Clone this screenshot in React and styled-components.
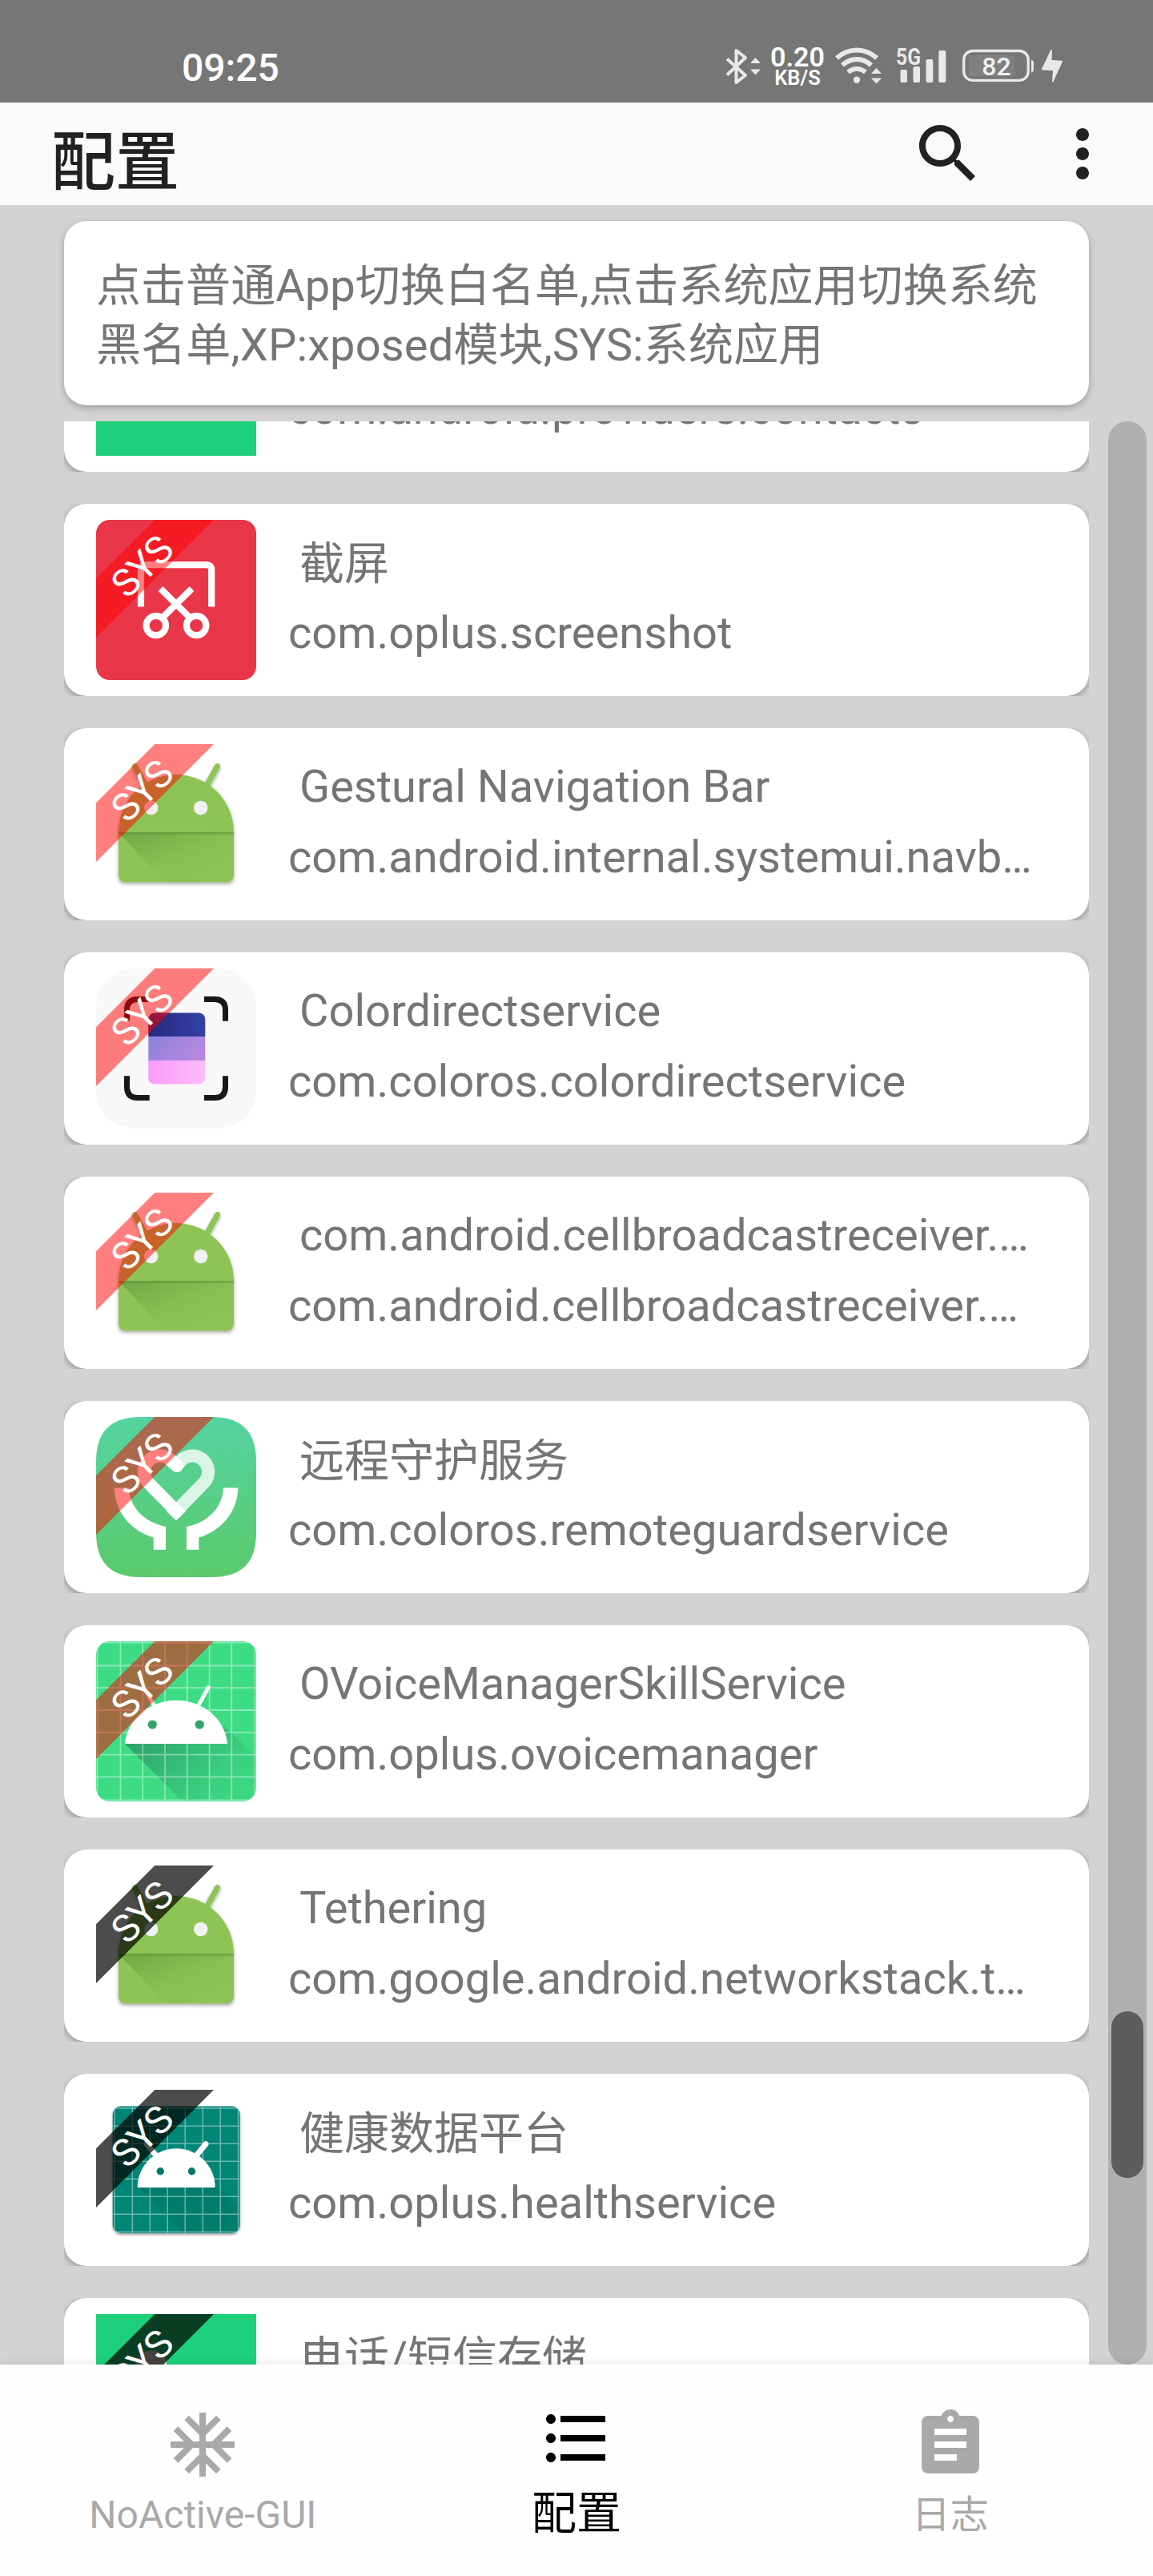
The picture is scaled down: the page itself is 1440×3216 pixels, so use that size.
import React from "react";
import styled, { createGlobalStyle } from "styled-components";

const GlobalStyle = createGlobalStyle`
  * { box-sizing: border-box; }
  body {
    margin: 0;
    background: #d3d3d3;
    font-family: Roboto, "Noto Sans CJK SC", sans-serif;
  }
  svg { display: block; flex: none; }
`;

const Screen = styled.div`
  display: flex;
  flex-direction: column;
  width: 1440px;
  height: 3216px;
  overflow: hidden;
  background: #d3d3d3;
`;

/* ---------- status bar ---------- */

const StatusBar = styled.header`
  display: flex;
  align-items: flex-start;
  flex: none;
  height: 128px;
  padding: 58px 113px 0 227px;
  background: #767676;
  color: #fff;
`;

const Clock = styled.time`
  flex: 1;
  font-size: 48px;
  line-height: 54px;
  font-weight: 500;
`;

const StatusItem = styled.div`
  display: flex;
  flex: none;
  width: ${(p) => p.$w}px;
  margin-left: ${(p) => p.$gap || 0}px;
`;

const NetSpeed = styled.div`
  display: flex;
  flex-direction: column;
  align-items: center;
  flex: none;
  width: 72px;
  margin-left: 8px;
  font-weight: 600;
`;

const NetValue = styled.span`
  font-size: 34px;
  line-height: 27px;
`;

const NetUnit = styled.span`
  font-size: 25.5px;
  line-height: 25px;
`;

/* ---------- app bar ---------- */

const AppBar = styled.div`
  display: flex;
  align-items: center;
  flex: none;
  height: 128px;
  padding: 0 40px 0 64px;
  background: #fafafa;
  color: #212121;
`;

const Title = styled.h1`
  flex: 1;
  margin: 0;
  padding-top: 22px;
  font-size: 80px;
  font-weight: 500;
  line-height: 106px;
`;

const IconButton = styled.button`
  display: flex;
  padding: 0;
  margin: 0 0 0 ${(p) => p.$gap || 0}px;
  border: 0;
  background: none;
  color: inherit;
`;

/* ---------- content ---------- */

const Hint = styled.p`
  display: flex;
  flex-direction: column;
  flex: none;
  height: 230px;
  margin: 20px 80px;
  padding: 44px 40px 0;
  border-radius: 28px;
  background: #fff;
  box-shadow: 0 3px 8px rgba(0, 0, 0, 0.26);
  color: #757575;
  font-size: 56px;
  line-height: 74px;
  white-space: nowrap;
`;

const HintLine = styled.span`
  letter-spacing: ${(p) => p.$track}px;
`;

const Body = styled.main`
  display: flex;
  flex: none;
  height: 2426px;
  padding: 0 8px 0 80px;
  overflow: hidden;
`;

const List = styled.ul`
  display: flex;
  flex-direction: column;
  gap: 40px;
  flex: none;
  width: 1280px;
  margin: -177px 24px 0 0;
  padding: 0;
  list-style: none;
`;

const Row = styled.li`
  flex: none;
  height: 240px;
  overflow: hidden;
`;

const Card = styled.article`
  display: flex;
  gap: 40px;
  height: 100%;
  padding: 20px 40px;
  border-radius: 28px;
  background: #fff;
  box-shadow: 0 3px 10px rgba(0, 0, 0, 0.32);
`;

const Labels = styled.div`
  flex: 1;
  min-width: 0;
  padding-top: 9px;
  color: #757575;
  font-size: 56px;
  line-height: 88px;
  white-space: nowrap;
`;

const Name = styled.div`
  height: 88px;
  padding: ${(p) => (p.$cjk ? 2 : 0)}px 0 0 14px;
`;

const Package = styled.div`
  height: 88px;
  letter-spacing: 0.04px;
`;

const Track = styled.div`
  flex: none;
  width: 48px;
  height: 2426px;
  padding: 1985px 4px 0;
  border-radius: 24px;
  background: #b0b0b0;
`;

const Thumb = styled.div`
  height: 208px;
  border-radius: 20px;
  background: #5d5d5d;
`;

/* ---------- bottom navigation ---------- */

const BottomNav = styled.nav`
  position: relative;
  display: flex;
  flex: none;
  height: 264px;
  padding: 0 20px;
  background: #fefefe;
  box-shadow: 0 0 12px rgba(0, 0, 0, 0.12);
`;

const NavItem = styled.a`
  display: flex;
  flex: 1;
  flex-direction: column;
  align-items: center;
  padding-top: ${(p) => (p.$active ? 44 : 52)}px;
  color: ${(p) => (p.$active ? "#000" : "#a9a9a9")};
  font-size: ${(p) => (p.$active ? 56 : 48)}px;
  line-height: 64px;
`;

const NavLabel = styled.span`
  margin-top: ${(p) => (p.$active ? 14 : 8)}px;
`;

/* ---------- glyphs ---------- */

const Glyph = ({ d }) => (
  <svg width="96" height="96" viewBox="0 0 24 24" fill="currentColor">
    <path d={d} />
  </svg>
);

const SEARCH =
  "M15.5 14h-.79l-.28-.27C15.41 12.59 16 11.11 16 9.5 16 5.91 13.09 3 9.5 3S3 5.91 3 9.5 5.91 16 9.5 16c1.61 0 3.09-.59 4.23-1.57l.27.28v.79l5 4.99L20.49 19l-4.99-5zm-6 0C7.01 14 5 11.99 5 9.5S7.01 5 9.5 5 14 7.01 14 9.5 11.99 14 9.5 14z";
const MORE =
  "M12 8c1.1 0 2-.9 2-2s-.9-2-2-2-2 .9-2 2 .9 2 2 2zm0 2c-1.1 0-2 .9-2 2s.9 2 2 2 2-.9 2-2-.9-2-2-2zm0 6c-1.1 0-2 .9-2 2s.9 2 2 2 2-.9 2-2-.9-2-2-2z";
const SNOW =
  "M22 11h-4.17l3.24-3.24-1.41-1.42L15 11h-2V9l4.66-4.66-1.42-1.41L13 6.17V2h-2v4.17L7.76 2.93 6.34 4.34 11 9v2H9L4.34 6.34 2.93 7.76 6.17 11H2v2h4.17l-3.24 3.24 1.41 1.42L9 13h2v2l-4.66 4.66 1.42 1.41L11 17.83V22h2v-4.17l3.24 3.24 1.42-1.41L13 15v-2h2l4.66 4.66 1.41-1.42L17.83 13H22z";
const BULLETS =
  "M4 10.5c-.83 0-1.5.67-1.5 1.5s.67 1.5 1.5 1.5 1.5-.67 1.5-1.5-.67-1.5-1.5-1.5zm0-6c-.83 0-1.5.67-1.5 1.5S3.17 7.5 4 7.5 5.5 6.83 5.5 6 4.83 4.5 4 4.5zm0 12c-.83 0-1.5.68-1.5 1.5s.68 1.5 1.5 1.5 1.5-.68 1.5-1.5-.67-1.5-1.5-1.5zM7 19h14v-2H7v2zm0-6h14v-2H7v2zm0-8v2h14V5H7z";
const CLIPBOARD =
  "M19 3h-4.18C14.4 1.84 13.3 1 12 1c-1.3 0-2.4.84-2.82 2H5c-1.1 0-2 .9-2 2v14c0 1.1.9 2 2 2h14c1.1 0 2-.9 2-2V5c0-1.1-.9-2-2-2zm-7 0c.55 0 1 .45 1 1s-.45 1-1 1-1-.45-1-1 .45-1 1-1zm2 14H7v-2h7v2zm3-4H7v-2h10v2zm0-4H7V7h10v2z";

const Bluetooth = () => (
  <svg width="46" height="50" viewBox="0 0 46 50">
    <path d="M2 15.5 L25 36 L13.5 45 V5 L25 14 L2 35.5" fill="none" stroke="#e8e8e8" strokeWidth="4" strokeLinejoin="round" />
    <path d="M31 21 L37.5 14 L44 21Z M31 28.500 H44 L37.500 35.500Z" fill="#e8e8e8" />
  </svg>
);

const Wifi = () => (
  <svg width="60" height="50" viewBox="0 0 60 50">
    <g fill="none" stroke="#e8e8e8" strokeWidth="6">
      <path d="M2 14.500 C17 1.300 37 1.300 52 14.500" />
      <path d="M9 23.500 C20 13.500 34 13.500 45 23.500" />
      <path d="M16 32 C23 26.500 31 26.500 38 32" />
    </g>
    <circle cx="27" cy="41.800" r="4.200" fill="#e8e8e8" />
    <path d="M45 34 L51.500 27 L58 34Z M45 39.500 H58 L51.500 46.500Z" fill="#e8e8e8" />
  </svg>
);

const Signal = () => (
  <svg width="66" height="54" viewBox="-4 -4 66 54" fill="#e8e8e8">
    <text x="-1" y="23" fontSize="29" fontWeight="700" textLength="31" lengthAdjust="spacingAndGlyphs">5G</text>
    <rect x="4.500" y="29" width="8.500" height="16" rx="2" />
    <rect x="20.500" y="25" width="8.500" height="20" rx="2" />
    <rect x="36.500" y="16" width="8.800" height="29" rx="2" />
    <rect x="52.300" y="5" width="9" height="40" rx="2" />
  </svg>
);

const SignalItem = styled(StatusItem)`
  margin-top: -4px;
`;

const Battery = () => (
  <svg width="90" height="50" viewBox="0 0 90 50">
    <rect x="8" y="11" width="57" height="26" fill="#808080" />
    <rect x="1.700" y="5.500" width="80.500" height="36.800" rx="11" fill="none" stroke="#e8e8e8" strokeWidth="3.300" />
    <path d="M86 16.500 q3 1 3 4 v8 q0 3 -3 4Z" fill="#e8e8e8" />
    <text x="42.500" y="36" fontSize="32" fontWeight="500" textAnchor="middle" fill="#f0f0f0">82</text>
  </svg>
);

const Bolt = () => (
  <svg width="26" height="50" viewBox="0 0 26 50">
    <path d="M11.500 4 L13 4.500 L12.500 17 L25.500 17.800 L26 19 L14.500 44 L13 44.500 L14 30 L0.500 29.500 L0 28Z" fill="#e8e8e8" />
  </svg>
);

/* ---------- launcher icons, drawn on a 200 x 200 canvas ---------- */

const Screenshot = () => (
  <g>
    <rect width="200" height="200" rx="17" fill="#e93648" />
    <g fill="none" stroke="#fff" strokeWidth="8.200">
      <path d="M56 108.600 V62 Q56 56.200 62 56.200 H138 Q144.200 56.200 144.200 62 V108.600" />
      <path d="M80.500 86 L116 121 M119.500 86 L84 121" />
      <circle cx="74.800" cy="132" r="12.200" />
      <circle cx="125.200" cy="132" r="12.200" />
    </g>
  </g>
);

const Droid = () => (
  <g>
    <defs>
      <linearGradient id="fold" x1="0" y1="0" x2="1" y2="1">
        <stop offset="0" stopColor="#33691e" stopOpacity="0.3" />
        <stop offset="0.55" stopColor="#33691e" stopOpacity="0.04" />
        <stop offset="1" stopColor="#33691e" stopOpacity="0" />
      </linearGradient>
      <linearGradient id="seam" x1="0" y1="0" x2="0" y2="1">
        <stop offset="0" stopColor="#33691e" stopOpacity="0.4" />
        <stop offset="1" stopColor="#33691e" stopOpacity="0" />
      </linearGradient>
      <filter id="drop" x="-10%" y="-10%" width="120%" height="125%">
        <feDropShadow dx="0" dy="2.500" stdDeviation="2" floodColor="#1b2b10" floodOpacity="0.4" />
      </filter>
    </defs>
    <g filter="url(#drop)">
      <path d="M138 52 L151.500 27.500 M62 52 L48.500 27.500" stroke="#8ec454" strokeWidth="7" strokeLinecap="round" />
      <path d="M28 110 A72 72 0 0 1 172 110 V163 Q172 172 163 172 H37 Q28 172 28 163Z" fill="#8ec454" />
    </g>
    <path d="M28 110.500 H172 V163 Q172 172 163 172 H87Z" fill="url(#fold)" />
    <rect x="28" y="110" width="144" height="4" fill="url(#seam)" />
    <circle cx="68.700" cy="79.500" r="8.700" fill="#f1f1f1" />
    <circle cx="130.700" cy="79.500" r="8.700" fill="#f1f1f1" />
  </g>
);

const ColorDirect = () => (
  <g>
    <defs>
      <linearGradient id="navy"><stop stopColor="#28287a" /><stop offset="1" stopColor="#3142a8" /></linearGradient>
      <linearGradient id="lilac" x1="0" y1="0" x2="1" y2="0.4"><stop stopColor="#8c82de" /><stop offset="1" stopColor="#b588e0" /></linearGradient>
      <linearGradient id="pink"><stop stopColor="#fb9afa" /><stop offset="1" stopColor="#fdbefb" /></linearGradient>
      <clipPath id="swatch"><rect x="65.300" y="55.400" width="71" height="89.200" rx="8" /></clipPath>
    </defs>
    <rect width="200" height="200" rx="48" fill="#f8f8f9" />
    <g clipPath="url(#swatch)">
      <rect x="65" y="55" width="72" height="30.500" fill="url(#navy)" />
      <rect x="65" y="85" width="72" height="30.500" fill="url(#lilac)" />
      <rect x="65" y="115" width="72" height="30" fill="url(#pink)" />
    </g>
    <path
      d="M38.500 65.700 V52 Q38.500 38.500 52 38.500 H66.700 M135 38.500 H148 Q161.500 38.500 161.500 52 V65.700 M161.500 134.300 V148 Q161.500 161.500 148 161.500 H135 M66.700 161.500 H52 Q38.500 161.500 38.500 148 V134.300"
      fill="none"
      stroke="#17171c"
      strokeWidth="7"
    />
  </g>
);

const HAND = "M22.700 88.600 H41 C41.500 112 60 132 87 137 V165.700 H71.700 V150.500 C45 143 23.500 120 22.700 88.600Z";

const RemoteGuard = () => (
  <g>
    <defs>
      <linearGradient id="mint" x1="0" y1="0" x2="0" y2="1"><stop stopColor="#54d3a0" /><stop offset="1" stopColor="#5bca6c" /></linearGradient>
    </defs>
    <path d="M0 56 C0 18 18 0 56 0 H144 C182 0 200 18 200 56 V144 C200 182 182 200 144 200 H56 C18 200 0 182 0 144Z" fill="url(#mint)" />
    <path d="M100 117.700 L135.800 81 A20 20 0 0 0 108.200 52.500 L101 60" fill="none" stroke="#daf5e6" strokeWidth="16" />
    <path d="M106 123.700 L64.200 81 A20 20 0 0 1 91.800 52.500 L101 61" fill="none" stroke="#fff" strokeWidth="16" />
    <circle cx="101" cy="61" r="8" fill="#fff" />
    <path d="M100 129 L88 118 L100 106 L112 117.700Z" fill="#fff" />
    <path d={HAND} fill="#fff" />
    <path d={HAND} fill="#fff" transform="matrix(-1 0 0 1 200 0)" />
  </g>
);

const lines = (vs, from, to) =>
  vs.map((v) => `M${v} ${from}V${to}M${from} ${v}H${to}`).join("");

const OVoice = () => (
  <g>
    <defs>
      <clipPath id="tile"><rect width="200" height="200" rx="17" /></clipPath>
      <linearGradient id="cast" x1="0" y1="0" x2="1" y2="0.6">
        <stop stopColor="#1c5a48" stopOpacity="0.5" />
        <stop offset="0.8" stopColor="#1c5a48" stopOpacity="0.1" />
        <stop offset="1" stopColor="#1c5a48" stopOpacity="0.04" />
      </linearGradient>
    </defs>
    <g clipPath="url(#tile)">
      <rect width="200" height="200" fill="#3ddc84" />
      <path d="M36 128 L108 200 H200 V144 L160 106 Z" fill="url(#cast)" />
      <path d={lines([1.5, 30.5, 58.200, 86, 113.800, 141.600, 169.300, 198.500], 0, 200)} stroke="#fff" strokeOpacity="0.4" strokeWidth="1.800" />
    </g>
    <path d="M129 78 L140.300 57.500 M71 78 L59.700 57.500" stroke="#fff" strokeWidth="4.800" strokeLinecap="round" />
    <path d="M36 128 A64.200 59 0 0 1 164 128Z" fill="#fff" />
    <circle cx="70.300" cy="104" r="5.600" fill="#33a567" />
    <circle cx="129.300" cy="104" r="5.600" fill="#33a567" />
  </g>
);

const Health = () => (
  <g>
    <defs>
      <filter id="lift" x="-10%" y="-10%" width="120%" height="125%">
        <feDropShadow dx="0" dy="2" stdDeviation="1.800" floodColor="#000" floodOpacity="0.4" />
      </filter>
    </defs>
    <rect x="20.700" y="20.500" width="159" height="158.500" rx="10" fill="#008577" filter="url(#lift)" />
    <path d="M52 122 L108 178 H170 Q179 178 179 169 V148 L148 118Z" fill="#004d40" fillOpacity="0.13" />
    <path d={lines([23, 45.300, 67.300, 89.200, 111.200, 133.200, 155.200, 177.500], 21, 179)} stroke="#fff" strokeOpacity="0.42" strokeWidth="1.500" />
    <path d="M126 81 L137 67.700 M74 81 L63 67.700" stroke="#fff" strokeWidth="7" strokeLinecap="round" />
    <path d="M51.700 122 A48.500 48.800 0 0 1 148.700 122Z" fill="#fff" />
    <circle cx="80.300" cy="101.800" r="4.700" fill="#00796b" />
    <circle cx="119.500" cy="101.800" r="4.700" fill="#00796b" />
  </g>
);

const Provider = () => (
  <g>
    <rect width="200" height="200" fill="#1ecf7c" />
    <circle cx="69" cy="65" r="19.500" fill="#eedede" />
  </g>
);

const PlainProvider = () => <rect width="200" height="200" fill="#1ecf7c" />;

const AppIcon = ({ art: Art, ribbon }) => (
  <svg width="200" height="200" viewBox="0 0 200 200">
    <Art />
    {ribbon && (
      <>
        <path d="M73.300 0 H147 L0 147 V73.300Z" fill={ribbon} />
        <text transform="translate(57.300 57.700) rotate(-45)" y="17" fontSize="48" textAnchor="middle" fill="#fff">SYS</text>
      </>
    )}
  </svg>
);

const RED = "rgba(255,0,0,0.5)";
const BLACK = "rgba(0,0,0,0.7)";

const apps = [
  { art: PlainProvider, pkg: "com.android.providers.contacts" },
  { art: Screenshot, ribbon: RED, name: "截屏", cjk: true, pkg: "com.oplus.screenshot" },
  { art: Droid, ribbon: RED, name: "Gestural Navigation Bar", pkg: "com.android.internal.systemui.navb…" },
  { art: ColorDirect, ribbon: RED, name: "Colordirectservice", pkg: "com.coloros.colordirectservice" },
  { art: Droid, ribbon: RED, name: "com.android.cellbroadcastreceiver.…", pkg: "com.android.cellbroadcastreceiver.…" },
  { art: RemoteGuard, ribbon: RED, name: "远程守护服务", cjk: true, pkg: "com.coloros.remoteguardservice" },
  { art: OVoice, ribbon: RED, name: "OVoiceManagerSkillService", pkg: "com.oplus.ovoicemanager" },
  { art: Droid, ribbon: BLACK, name: "Tethering", pkg: "com.google.android.networkstack.t…" },
  { art: Health, ribbon: BLACK, name: "健康数据平台", cjk: true, pkg: "com.oplus.healthservice" },
  { art: Provider, ribbon: BLACK, name: "电话/短信存储", cjk: true },
];

const tabs = [
  { label: "NoActive-GUI", icon: SNOW },
  { label: "配置", icon: BULLETS, active: true },
  { label: "日志", icon: CLIPBOARD },
];

export default function App() {
  return (
    <Screen>
      <GlobalStyle />
      <StatusBar>
        <Clock>09:25</Clock>
        <StatusItem $w={46}><Bluetooth /></StatusItem>
        <NetSpeed>
          <NetValue>0.20</NetValue>
          <NetUnit>KB/S</NetUnit>
        </NetSpeed>
        <StatusItem $w={60} $gap={11}><Wifi /></StatusItem>
        <SignalItem $w={66} $gap={13}><Signal /></SignalItem>
        <StatusItem $w={90} $gap={20}><Battery /></StatusItem>
        <StatusItem $w={26} $gap={9}><Bolt /></StatusItem>
      </StatusBar>
      <AppBar>
        <Title>配置</Title>
        <IconButton aria-label="search"><Glyph d={SEARCH} /></IconButton>
        <IconButton aria-label="more" $gap={72}><Glyph d={MORE} /></IconButton>
      </AppBar>
      <Hint>
        <HintLine $track={0.06}>点击普通App切换白名单,点击系统应用切换系统</HintLine>
        <HintLine $track={0.16}>黑名单,XP:xposed模块,SYS:系统应用</HintLine>
      </Hint>
      <Body>
        <List>
          {apps.map((app, i) => (
            <Row key={i}>
              <Card>
                <AppIcon art={app.art} ribbon={app.ribbon} />
                <Labels>
                  <Name $cjk={app.cjk}>{app.name}</Name>
                  <Package>{app.pkg}</Package>
                </Labels>
              </Card>
            </Row>
          ))}
        </List>
        <Track><Thumb /></Track>
      </Body>
      <BottomNav>
        {tabs.map((t) => (
          <NavItem key={t.label} $active={t.active}>
            <Glyph d={t.icon} />
            <NavLabel $active={t.active}>{t.label}</NavLabel>
          </NavItem>
        ))}
      </BottomNav>
    </Screen>
  );
}
